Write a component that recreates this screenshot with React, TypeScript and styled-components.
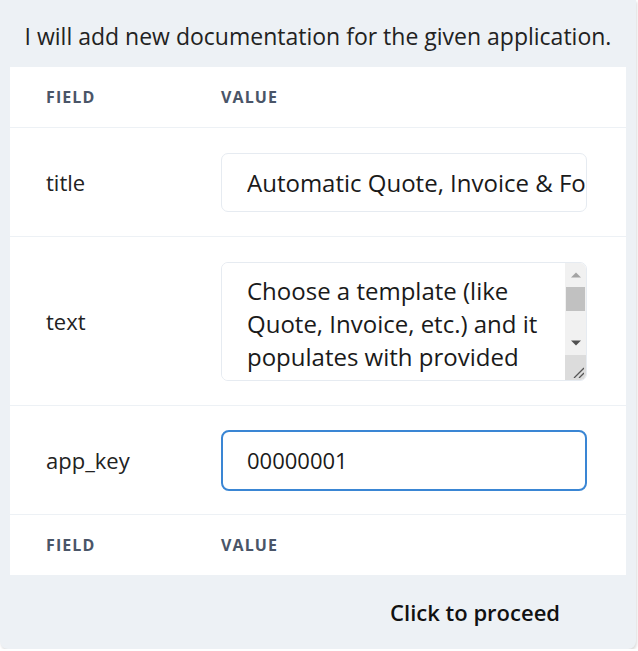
import React from "react";
import styled, { createGlobalStyle } from "styled-components";

const Global = createGlobalStyle`
  html, body { margin: 0; padding: 0; background: #ffffff; }
  body { font-family: "Open Sans", "Noto Sans", sans-serif; color: #1a1a1a; }
  * { box-sizing: border-box; }
`;

const Panel = styled.div`
  width: 636px;
  background: #edf1f5;
  border-radius: 0 0 8px 8px;
  box-shadow: 1px 2px 3px rgba(0, 0, 0, 0.14);
  padding: 0 10px 22px 10px;
`;

const Intro = styled.p`
  margin: 0;
  height: 67px;
  display: flex;
  align-items: center;
  justify-content: center;
  padding-top: 4px;
  font-size: 23px;
  color: #222;
`;

const Table = styled.div`
  background: #ffffff;
  display: grid;
  grid-template-columns: 211px 1fr;
`;

const HeadCell = styled.div<{ $first?: boolean; $line?: boolean }>`
  height: ${(p) => (p.$line ? "61px" : "60px")};
  display: flex;
  align-items: center;
  padding-left: ${(p) => (p.$first ? "36px" : "0")};
  font-size: 16px;
  font-weight: 700;
  letter-spacing: 1.1px;
  color: #4a5568;
  text-transform: uppercase;
  border-bottom: ${(p) => (p.$line ? "1px solid #edf1f5" : "none")};
`;

const LabelCell = styled.div<{ $h: number }>`
  height: ${(p) => p.$h}px;
  display: flex;
  align-items: center;
  padding-left: 36px;
  font-size: 22px;
  color: #222;
  border-bottom: 1px solid #edf1f5;
`;

const ValueCell = styled.div<{ $h: number }>`
  height: ${(p) => p.$h}px;
  display: flex;
  align-items: center;
  padding-right: 39px;
  border-bottom: 1px solid #edf1f5;
`;

const TextInput = styled.input<{ $focused?: boolean }>`
  width: 100%;
  height: ${(p) => (p.$focused ? "61px" : "59px")};
  border: ${(p) => (p.$focused ? "2px solid #3a86d4" : "1px solid #e6ebf1")};
  border-radius: ${(p) => (p.$focused ? "8px" : "7px")};
  padding: ${(p) => (p.$focused ? "0 24px" : "0 1px 0 25px")};
  font-family: "Open Sans", "Noto Sans", sans-serif;
  font-size: ${(p) => (p.$focused ? "22px" : "24px")};
  color: #1a1a1a;
  background: #fff;
  outline: none;
`;

const TextBox = styled.div`
  width: 100%;
  height: 119px;
  display: flex;
  border: 1px solid #e6ebf1;
  border-radius: 7px;
  overflow: hidden;
  background: #fff;
`;

const TextArea = styled.textarea`
  flex: 1;
  min-width: 0;
  height: 100%;
  border: none;
  padding: 11px 11px 0 25px;
  font-family: "Open Sans", "Noto Sans", sans-serif;
  font-size: 24px;
  line-height: 33px;
  color: #1a1a1a;
  background: #fff;
  outline: none;
  overflow: hidden;
  resize: none;
`;

const ScrollBar = styled.div`
  width: 21px;
  display: flex;
  flex-direction: column;
  background: #f1f1f1;
`;

const ScrollButton = styled.div`
  height: 24px;
  display: flex;
  align-items: center;
  justify-content: center;
`;

const ScrollTrack = styled.div`
  flex: 1;
  display: flex;
  flex-direction: column;
`;

const ScrollThumb = styled.div`
  height: 24px;
  margin: 0 1px;
  background: #c1c1c1;
`;

const Resizer = styled.div`
  height: 25px;
  background: #dcdcdc;
  display: flex;
  align-items: flex-end;
  justify-content: flex-end;
  padding: 0 2px 2px 0;
`;

const Footer = styled.div`
  display: flex;
  justify-content: flex-end;
  padding: 22px 66px 0 0;
`;

const ProceedButton = styled.button`
  border: none;
  background: transparent;
  font-family: "Open Sans", "Noto Sans", sans-serif;
  font-size: 22px;
  font-weight: 600;
  color: #111;
  padding: 0;
  cursor: pointer;
`;

const Arrow = ({ up, color }: { up?: boolean; color: string }) => (
  <svg width="10" height="6" viewBox="0 0 10 6">
    <path d={up ? "M0 5.5 L5 0.5 L10 5.5 Z" : "M0 0.5 L5 5.5 L10 0.5 Z"} fill={color} />
  </svg>
);

const ResizeGrip = () => (
  <svg width="12" height="12" viewBox="0 0 12 12">
    <path d="M2 12 L12 2 M7 12 L12 7" stroke="#555" strokeWidth="1.3" fill="none" />
  </svg>
);

export default function App() {
  return (
    <>
      <Global />
      <Panel>
        <Intro>I will add new documentation for the given application.</Intro>
        <Table>
          <HeadCell $first $line>Field</HeadCell>
          <HeadCell $line>Value</HeadCell>

          <LabelCell $h={109}>title</LabelCell>
          <ValueCell $h={109}>
            <TextInput readOnly value="Automatic Quote, Invoice & Form Generator" />
          </ValueCell>

          <LabelCell $h={169}>text</LabelCell>
          <ValueCell $h={169}>
            <TextBox>
              <TextArea
                readOnly
                value="Choose a template (like Quote, Invoice, etc.) and it populates with provided data, then exports it as a ready PDF file that you can send to your client."
              />
              <ScrollBar>
                <ScrollButton>
                  <Arrow up color="#a3a3a3" />
                </ScrollButton>
                <ScrollTrack>
                  <ScrollThumb />
                </ScrollTrack>
                <ScrollButton>
                  <Arrow color="#505050" />
                </ScrollButton>
                <Resizer>
                  <ResizeGrip />
                </Resizer>
              </ScrollBar>
            </TextBox>
          </ValueCell>

          <LabelCell $h={109}>app_key</LabelCell>
          <ValueCell $h={109}>
            <TextInput $focused readOnly value="00000001" />
          </ValueCell>

          <HeadCell $first>Field</HeadCell>
          <HeadCell>Value</HeadCell>
        </Table>
        <Footer>
          <ProceedButton>Click to proceed</ProceedButton>
        </Footer>
      </Panel>
    </>
  );
}
